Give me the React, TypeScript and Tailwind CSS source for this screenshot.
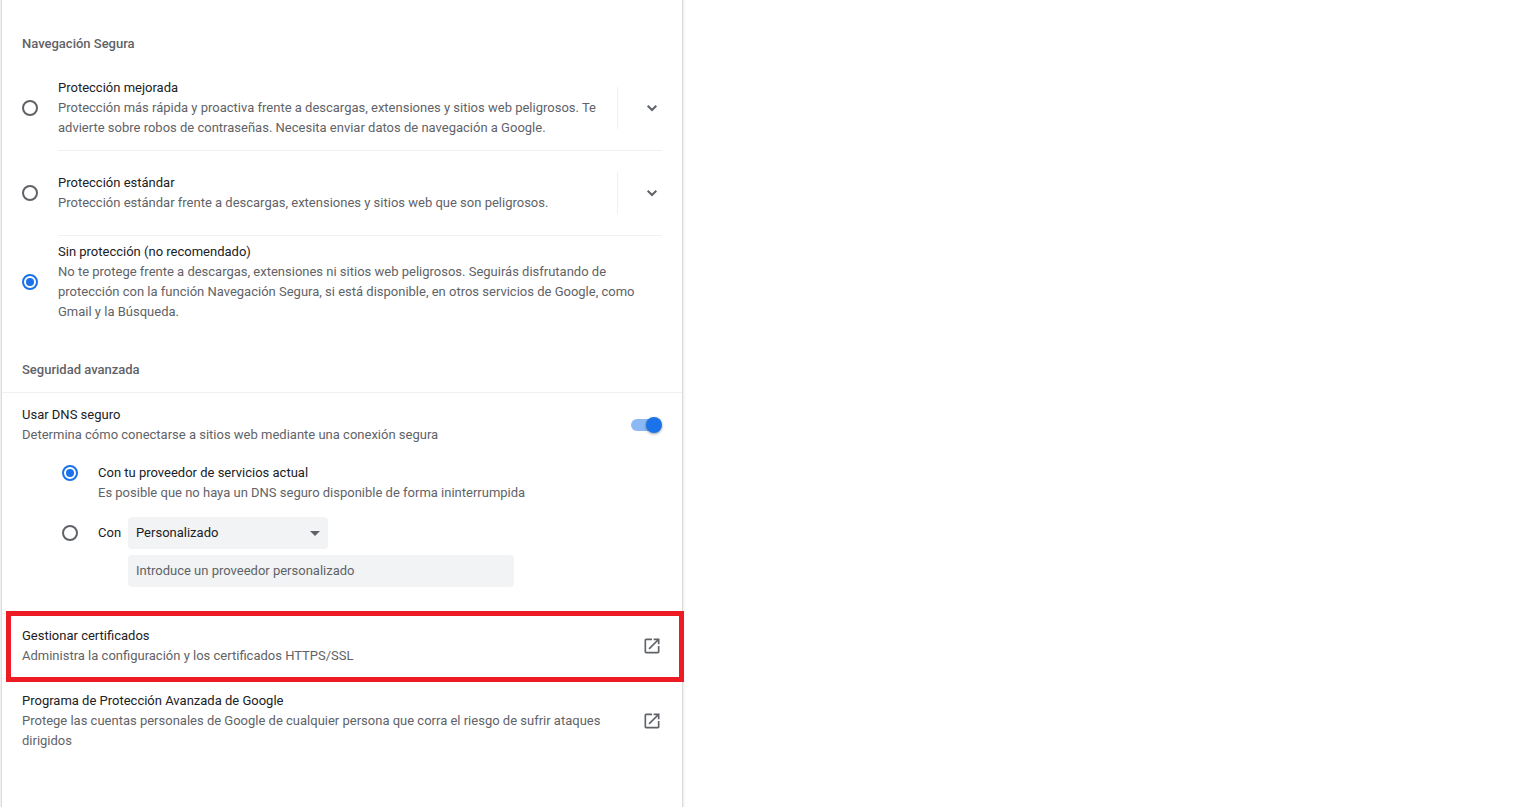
import { useState } from 'react'
import type { ReactNode } from 'react'
import { MdArrowDropDown, MdOpenInNew } from 'react-icons/md'

type Protection = 'enhanced' | 'standard' | 'disabled'
type DnsMode = 'automatic' | 'secure'

interface RadioProps {
  id: string
  name: string
  checked: boolean
  onChange: () => void
}

function Radio({ id, name, checked, onChange }: RadioProps) {
  return (
    <input
      type="radio"
      id={id}
      name={name}
      checked={checked}
      onChange={onChange}
      className="grid size-4 shrink-0 appearance-none place-content-center rounded-full border-2 border-[#5f6368] before:size-2 before:rounded-full checked:border-[#1a73e8] checked:before:bg-[#1a73e8]"
    />
  )
}

function ChevronDown() {
  return (
    <svg viewBox="0 0 20 20" className="size-5" fill="none" stroke="currentColor" strokeWidth="2" aria-hidden="true">
      <path d="M5.7 7.7 10 12l4.300-4.300" />
    </svg>
  )
}

interface ProtectionOptionProps {
  value: Protection
  selected: Protection
  onSelect: (value: Protection) => void
  title: string
  description: string
  expandable?: boolean
}

function ProtectionOption({ value, selected, onSelect, title, description, expandable }: ProtectionOptionProps) {
  return (
    <div className="px-5">
      <div className={expandable ? 'flex min-h-[84px] items-center gap-5' : 'flex items-center gap-5 py-1.5'}>
        <Radio
          id={`protection-${value}`}
          name="protection"
          checked={selected === value}
          onChange={() => onSelect(value)}
        />
        <label htmlFor={`protection-${value}`} className="flex-1">
          <span className="block text-[#202124]">{title}</span>
          <span className="block">{description}</span>
        </label>
        {expandable && (
          <div className="-ml-1 flex h-[42px] w-[45px] items-center justify-end border-l border-[#f0f0f0]">
            <button type="button" aria-label={`Mostrar más: ${title}`}>
              <ChevronDown />
            </button>
          </div>
        )}
      </div>
      {expandable && <div className="ml-9 border-b border-[#f0f0f0]" />}
    </div>
  )
}

interface LinkRowProps {
  title: string
  description: string
  children?: ReactNode
}

function LinkRow({ title, description, children }: LinkRowProps) {
  return (
    <div className="relative border-t border-[#f0f0f0]">
      <a href="#" className="flex items-center gap-5 px-5 py-3">
        <span className="flex-1">
          <span className="block text-[#202124]">{title}</span>
          <span className="block">{description}</span>
        </span>
        <MdOpenInNew className="size-5 shrink-0" />
      </a>
      {children}
    </div>
  )
}

export default function App() {
  const [protection, setProtection] = useState<Protection>('disabled')
  const [secureDns, setSecureDns] = useState(true)
  const [dnsMode, setDnsMode] = useState<DnsMode>('automatic')
  const [provider, setProvider] = useState('')

  return (
    <div className="flex min-h-screen overflow-hidden bg-white pl-0.5 font-['Roboto',sans-serif] text-[13px] leading-5 text-[#5f6368]">
      <main className="-my-2 w-full max-w-[680px] bg-white py-[42px] shadow-[0_1px_2px_0_rgba(60,64,67,0.3),0_1px_3px_1px_rgba(60,64,67,0.15)]">
        {/* Safe Browsing */}
        <section>
          <h2 className="px-5 pb-3 font-medium">Navegación Segura</h2>
          <ProtectionOption
            value="enhanced"
            selected={protection}
            onSelect={setProtection}
            title="Protección mejorada"
            description="Protección más rápida y proactiva frente a descargas, extensiones y sitios web peligrosos. Te advierte sobre robos de contraseñas. Necesita enviar datos de navegación a Google."
            expandable
          />
          <ProtectionOption
            value="standard"
            selected={protection}
            onSelect={setProtection}
            title="Protección estándar"
            description="Protección estándar frente a descargas, extensiones y sitios web que son peligrosos."
            expandable
          />
          <ProtectionOption
            value="disabled"
            selected={protection}
            onSelect={setProtection}
            title="Sin protección (no recomendado)"
            description="No te protege frente a descargas, extensiones ni sitios web peligrosos. Seguirás disfrutando de protección con la función Navegación Segura, si está disponible, en otros servicios de Google, como Gmail y la Búsqueda."
          />
        </section>

        {/* Advanced security */}
        <section className="pt-8">
          <h2 className="px-5 pb-3 font-medium">Seguridad avanzada</h2>

          <div className="flex items-center gap-5 border-t border-[#f0f0f0] px-5 py-3">
            <label htmlFor="secure-dns" className="flex-1">
              <span className="block text-[#202124]">Usar DNS seguro</span>
              <span className="block">Determina cómo conectarse a sitios web mediante una conexión segura</span>
            </label>
            <input
              type="checkbox"
              role="switch"
              id="secure-dns"
              checked={secureDns}
              onChange={(e) => setSecureDns(e.target.checked)}
              className="relative h-4 w-[31px] shrink-0 appearance-none before:absolute before:left-0 before:top-0.5 before:h-3 before:w-7 before:rounded-full before:bg-[#bdc1c6] after:absolute after:left-0 after:top-0 after:size-4 after:rounded-full after:bg-white after:shadow-[0_1px_3px_0_rgba(0,0,0,0.4)] checked:before:bg-[#8cb9f4] checked:after:left-[15px] checked:after:bg-[#1a73e8]"
            />
          </div>

          <div className="flex flex-col gap-3.5 pb-[26px] pl-[60px] pr-5 pt-1.5">
            <div className="flex items-start gap-5">
              <div className="flex h-5 items-center">
                <Radio
                  id="dns-automatic"
                  name="dns-mode"
                  checked={dnsMode === 'automatic'}
                  onChange={() => setDnsMode('automatic')}
                />
              </div>
              <label htmlFor="dns-automatic">
                <span className="block text-[#202124]">Con tu proveedor de servicios actual</span>
                <span className="block">Es posible que no haya un DNS seguro disponible de forma ininterrumpida</span>
              </label>
            </div>

            <div className="flex items-start gap-5">
              <div className="flex h-8 items-center">
                <Radio
                  id="dns-secure"
                  name="dns-mode"
                  checked={dnsMode === 'secure'}
                  onChange={() => setDnsMode('secure')}
                />
              </div>
              <div className="flex flex-1 items-start">
                <label htmlFor="dns-secure" className="flex h-8 w-[30px] items-center text-[#202124]">
                  Con
                </label>
                <div className="flex flex-1 flex-col gap-1.5">
                  <div className="relative w-[200px]">
                    <select
                      aria-label="Proveedor de DNS"
                      defaultValue="custom"
                      className="h-8 w-full appearance-none rounded bg-[#f1f3f4] pl-2 pr-6 text-[#202124]"
                    >
                      <option value="custom">Personalizado</option>
                    </select>
                    <MdArrowDropDown className="pointer-events-none absolute right-px top-1 size-6" />
                  </div>
                  <input
                    type="text"
                    aria-label="Proveedor personalizado"
                    placeholder="Introduce un proveedor personalizado"
                    value={provider}
                    onChange={(e) => setProvider(e.target.value)}
                    className="h-8 w-full max-w-[386px] rounded bg-[#f1f3f4] px-2 pb-0.5 text-[#202124] placeholder:text-[#5f6368]"
                  />
                </div>
              </div>
            </div>
          </div>

          <LinkRow
            title="Gestionar certificados"
            description="Administra la configuración y los certificados HTTPS/SSL"
          >
            {/* highlight frame around the row */}
            <div className="pointer-events-none absolute -bottom-1 -right-0.5 -top-[3px] left-1 z-10 border-[5px] border-[#ed1c24]" />
          </LinkRow>
          <LinkRow
            title="Programa de Protección Avanzada de Google"
            description="Protege las cuentas personales de Google de cualquier persona que corra el riesgo de sufrir ataques dirigidos"
          />
        </section>
      </main>
    </div>
  )
}
